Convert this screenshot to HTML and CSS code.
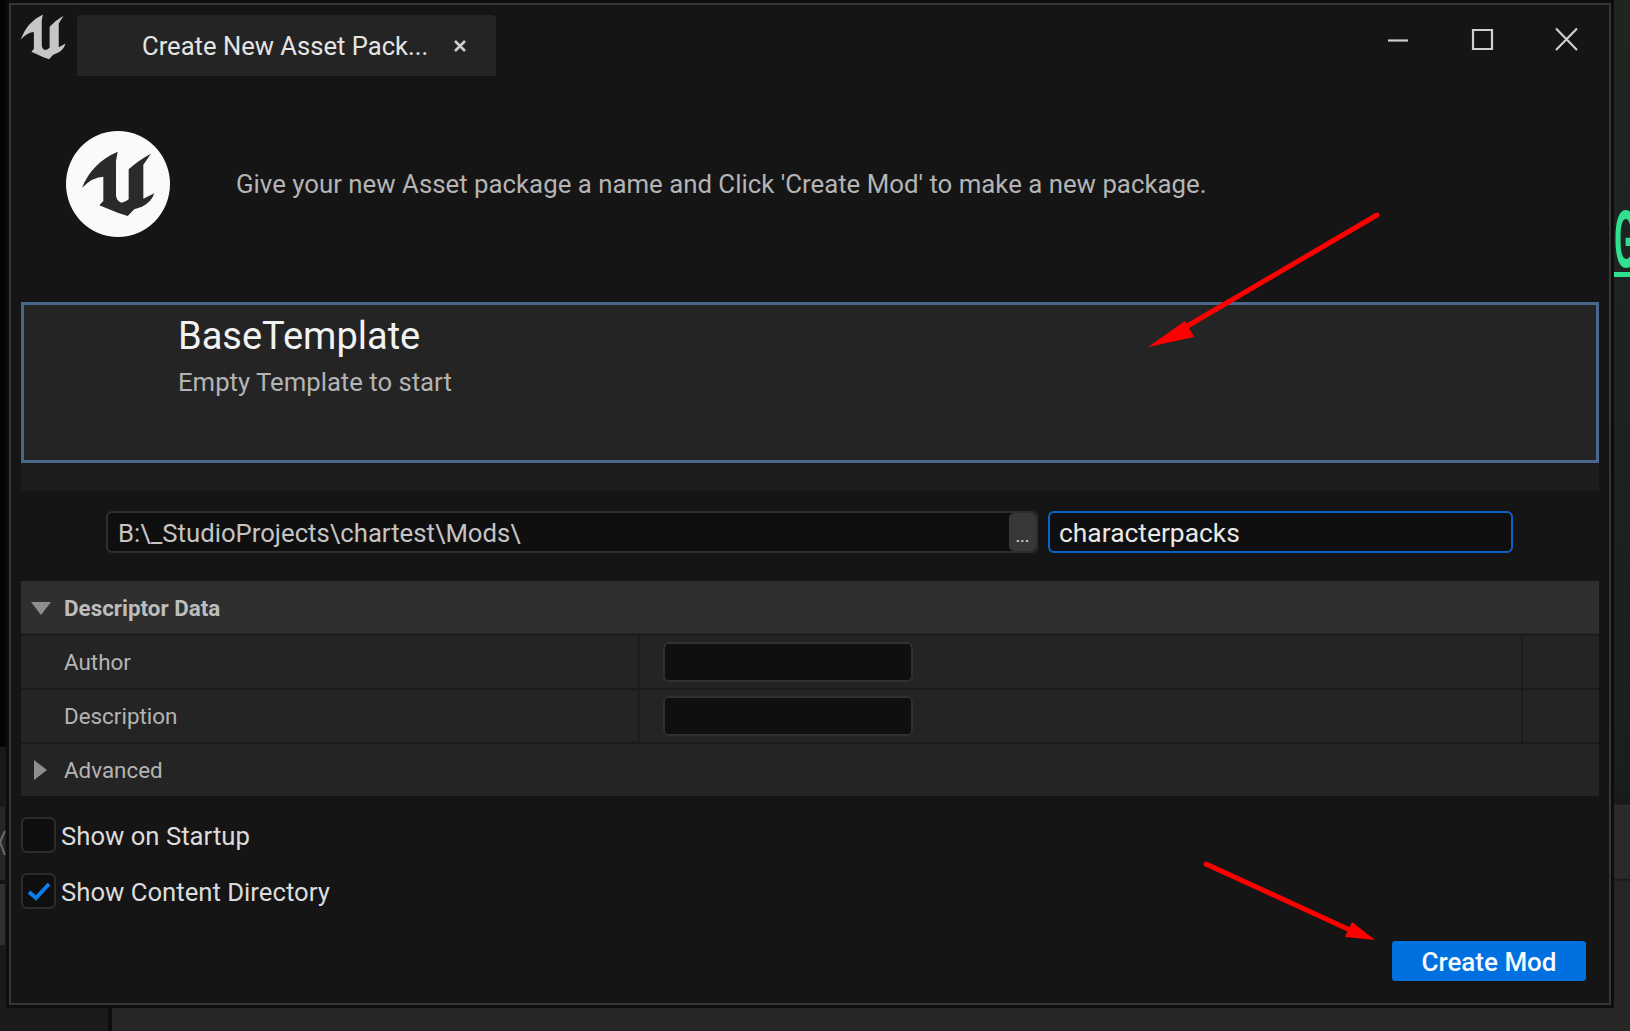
FILE: index.html
```html
<!DOCTYPE html>
<html>
<head>
  <meta charset="utf-8">
  <link rel="stylesheet" href="styles.css">
  <title>Create New Asset Package</title>
</head>
<body>
  <svg class="defs" width="0" height="0">
    <symbol id="ue-logo" viewBox="85 95 222 198" preserveAspectRatio="none">
      <path d="M88 205 Q118 130 195 97 L190 125 V228 Q192 248 207 250 Q220 248 228 240 V150 Q258 122 295 103 L272 136 V238 L305 222 Q295 250 268 262 L245 270 L225 290 L195 280 L140 258 L152 245 V172 Q122 172 88 205 Z"/>
    </symbol>
  </svg>

  <div class="backdrop-right">
    <span class="stray-glyph">G</span>
    <div class="stray-line"></div>
  </div>
  <div class="backdrop-left">
    <svg class="stray-cross" width="6" height="26" viewBox="0 0 6 26"><path d="M5 1 0 12 5 25"/></svg>
  </div>
  <div class="backdrop-bottom"><div class="bottom-bar"></div></div>

  <div class="window">
    <div class="title-bar">
      <svg class="app-logo"><use href="#ue-logo"/></svg>
      <div class="tab">
        <span class="tab-title">Create New Asset Pack...</span>
        <span class="tab-close">
          <svg width="14" height="14" viewBox="0 0 14 14"><path d="M2 2 12 12 M12 2 2 12"/></svg>
        </span>
      </div>
      <div class="window-controls">
        <svg width="24" height="24" viewBox="0 0 24 24"><path d="M2 13.5H22"/></svg>
        <svg width="24" height="24" viewBox="0 0 24 24"><path d="M3 3H22V22H3Z"/></svg>
        <svg width="24" height="24" viewBox="0 0 24 24"><path d="M2 1.5 23 23 M23 1.5 2 23"/></svg>
      </div>
    </div>

    <div class="intro">
      <div class="intro-logo">
        <svg><use href="#ue-logo"/></svg>
      </div>
      <p class="intro-text">Give your new Asset package a name and Click 'Create Mod' to make a new package.</p>
    </div>

    <div class="template-card">
      <div class="template-name">BaseTemplate</div>
      <div class="template-desc">Empty Template to start</div>
    </div>
    <div class="template-strip"></div>

    <div class="path-row">
      <div class="path-field">
        <span class="path-value">B:\_StudioProjects\chartest\Mods\</span>
        <span class="browse-btn">...</span>
      </div>
      <div class="name-field">characterpacks</div>
    </div>

    <div class="details">
      <div class="details-header">
        <span class="arrow-down"></span>
        <span>Descriptor Data</span>
      </div>
      <div class="details-row">
        <div class="cell-label">Author</div>
        <div class="cell-value"><div class="small-input"></div></div>
        <div class="cell-end"></div>
      </div>
      <div class="details-row">
        <div class="cell-label">Description</div>
        <div class="cell-value"><div class="small-input"></div></div>
        <div class="cell-end"></div>
      </div>
      <div class="details-advanced">
        <span class="arrow-right"></span>
        <span>Advanced</span>
      </div>
    </div>

    <div class="footer">
      <div class="checks">
        <div class="check-row">
          <span class="checkbox"></span>
          <span class="check-label">Show on Startup</span>
        </div>
        <div class="check-row">
          <span class="checkbox">
            <svg width="26" height="22" viewBox="0 0 26 22"><path d="M3 12 10 18 23 4"/></svg>
          </span>
          <span class="check-label">Show Content Directory</span>
        </div>
      </div>
      <div class="create-btn">Create Mod</div>
    </div>
  </div>

  <!-- red arrows drawn over the screenshot -->
  <svg class="annotations" width="1630" height="1031" viewBox="0 0 1630 1031">
    <path class="arrow-line" d="M1377 215 1172 335"/>
    <path class="arrow-head" d="M1148 347 1185 321 1194 337Z"/>
    <path class="arrow-line" d="M1206 864 1350 930"/>
    <path class="arrow-head" d="M1375 940 1352 922 1345 937Z"/>
  </svg>
</body>
</html>
```

FILE: styles.css
```css
:root {
  --window: #151515;
  --panel: #242424;
  --field: #0f0f0f;
  --text: #e4e4e4;
  --muted: #b4b4b4;
  --blue: #0070e0;
}

* {
  box-sizing: border-box;
}

html, body {
  height: 100%;
}

body {
  margin: 0;
  background-color: #0a0a0a;
  font-family: Roboto, "Liberation Sans", sans-serif;
  color: var(--text);
  overflow: hidden;
  position: relative;
}

.defs {
  position: absolute;
}

/* bits of the editor behind the dialog */
.backdrop-right {
  position: absolute;
  top: 0;
  right: 0;
  width: 16px;
  height: 100%;
  background: linear-gradient(#202522, #1c2320 30%, #1a1f1d 75%, #191919 78%, #2a2a2a 78.1%, #2a2a2a 85.2%, #1a1a1a 85.3%, #262626 85.6%);
  overflow: hidden;
}

.stray-glyph {
  position: absolute;
  left: 0;
  top: 200px;
  font-size: 80px;
  font-weight: 700;
  line-height: 80px;
  color: #2fe08f;
  transform: scaleX(0.42);
  transform-origin: left center;
}

.stray-line {
  position: absolute;
  left: 0;
  right: 0;
  top: 272px;
  height: 5px;
  background-color: #2fe08f;
}

.backdrop-left {
  position: absolute;
  left: 0;
  top: 0;
  width: 9px;
  height: 100%;
  background: linear-gradient(#050505 72.4%, #1a1a1a 72.5%);
}

.backdrop-left::before {
  content: "";
  position: absolute;
  left: 0;
  top: 807px;
  width: 5px;
  height: 138px;
  background: linear-gradient(#262626 53%, #141414 53%, #141414 56%, #303030 56%);
}

.stray-cross {
  position: absolute;
  left: 0;
  top: 830px;
  fill: none;
  stroke: #6a6a6a;
  stroke-width: 2;
}

.backdrop-bottom {
  position: absolute;
  left: 0;
  right: 0;
  bottom: 0;
  height: 26px;
  background-color: #262626;
}

.bottom-bar {
  width: 112px;
  height: 100%;
  background-color: #1b1b1b;
  border-right: 4px solid #0e0e0e;
}

.window {
  position: absolute;
  left: 9px;
  top: 3px;
  width: 1602px;
  height: 1002px;
  background-color: var(--window);
  border: 2px solid #363636;
  box-shadow: 0 0 0 3px #0d0d0d;
  padding: 0 10px;
  display: flex;
  flex-direction: column;
}

.title-bar {
  display: flex;
  align-items: flex-start;
  height: 71px;
  padding-top: 10px;
}

.app-logo {
  width: 46px;
  height: 46px;
  margin: -1px 0 0 -1px;
  fill: #c6c6c6;
  flex: none;
}

.tab {
  margin-left: 11px;
  width: 419px;
  height: 61px;
  background-color: var(--panel);
  border-radius: 4px 4px 0 0;
  display: flex;
  align-items: center;
  padding-left: 65px;
}

.tab-title {
  font-size: 25.6px;
  width: 311px;
  white-space: nowrap;
}

.tab-close svg {
  display: block;
  fill: none;
  stroke: #d0d0d0;
  stroke-width: 2.6;
}

.window-controls {
  margin-left: auto;
  display: flex;
  gap: 60px;
  padding: 12px 21px 0 0;
}

.window-controls svg {
  display: block;
  fill: none;
  stroke: #cfcfcf;
  stroke-width: 2.2;
}

.intro {
  height: 226px;
  display: flex;
  align-items: center;
  padding: 0 0 10px 45px;
}

.intro-logo {
  width: 104px;
  height: 106px;
  border-radius: 50%;
  background-color: #fafafa;
  display: flex;
  align-items: center;
  justify-content: center;
}

.intro-logo svg {
  width: 74px;
  height: 66px;
  fill: #2a2a2a;
}

.intro-text {
  margin: 0 0 0 66px;
  font-size: 25.8px;
  color: var(--muted);
  white-space: nowrap;
}

.template-card {
  height: 161px;
  background-color: var(--panel);
  border: 3px solid #47688c;
  padding: 7px 0 0 154px;
}

.template-name {
  font-size: 38px;
  line-height: 48px;
  color: #f2f2f2;
}

.template-desc {
  font-size: 25.7px;
  line-height: 44px;
  color: var(--muted);
}

.template-strip {
  height: 28px;
  background-color: #1c1c1c;
}

.path-row {
  display: flex;
  height: 90px;
  padding: 20px 0 0 85px;
  gap: 10px;
}

.path-field {
  width: 932px;
  height: 42px;
  background-color: var(--field);
  border: 2px solid #2e2e2e;
  border-radius: 6px;
  display: flex;
  align-items: center;
  justify-content: space-between;
  padding-left: 10px;
}

.path-value {
  font-size: 25.7px;
  padding-top: 2px;
  color: #c4c4c4;
}

.browse-btn {
  width: 27px;
  height: 38px;
  background-color: #383838;
  border-radius: 5px;
  font-size: 18px;
  line-height: 46px;
  text-align: center;
  color: #ddd;
}

.name-field {
  width: 465px;
  height: 42px;
  background-color: var(--field);
  border: 2px solid #0a62c4;
  border-radius: 6px;
  padding-left: 9px;
  font-size: 26.4px;
  line-height: 40px;
  color: #e8e8e8;
}

.details {
  font-size: 22.4px;
  color: var(--muted);
}

.details-header {
  height: 53px;
  padding-top: 2px;
  background-color: #2f2f2f;
  display: flex;
  align-items: center;
  font-weight: 700;
  color: #bdbdbd;
  border-bottom: 1px solid #262626;
}

.arrow-down {
  width: 0;
  height: 0;
  margin: 0 13px 0 10px;
  border-left: 10px solid transparent;
  border-right: 10px solid transparent;
  border-top: 13px solid #8e8e8e;
}

.details-row {
  height: 54px;
  background-color: var(--panel);
  border-top: 2px solid #1b1b1b;
  display: flex;
}

.cell-label {
  width: 617px;
  padding-left: 43px;
  line-height: 52px;
}

.cell-value {
  flex: 1;
  border-left: 2px solid #1c1c1c;
  padding: 6px 0 0 23px;
}

.cell-end {
  width: 78px;
  border-left: 2px solid #1c1c1c;
}

.small-input {
  width: 250px;
  height: 40px;
  background-color: var(--field);
  border: 2px solid #303030;
  border-radius: 6px;
}

.details-advanced {
  height: 54px;
  background-color: var(--panel);
  border-top: 2px solid #1b1b1b;
  display: flex;
  align-items: center;
}

.arrow-right {
  width: 0;
  height: 0;
  margin: 0 17px 0 13px;
  border-top: 10px solid transparent;
  border-bottom: 10px solid transparent;
  border-left: 13px solid #8e8e8e;
}

.footer {
  flex: 1;
  display: flex;
  justify-content: space-between;
}

.checks {
  padding-top: 21px;
  display: flex;
  flex-direction: column;
  gap: 20px;
}

.check-row {
  display: flex;
  align-items: center;
  gap: 5px;
  font-size: 25.7px;
  color: #dcdcdc;
}

.check-label {
  padding-top: 2px;
}

.checkbox {
  width: 35px;
  height: 36px;
  background-color: var(--field);
  border: 2px solid #2c2c2c;
  border-radius: 6px;
  display: flex;
  align-items: center;
  justify-content: center;
}

.checkbox svg {
  fill: none;
  stroke: #0f7cec;
  stroke-width: 4;
}

.create-btn {
  width: 194px;
  height: 40px;
  margin: 145px 13px 0 0;
  background-color: var(--blue);
  border-radius: 3px;
  text-align: center;
  font-size: 26px;
  font-weight: 500;
  line-height: 42px;
  color: #f4f8ff;
}

.annotations {
  position: absolute;
  left: 0;
  top: 0;
  pointer-events: none;
}

.arrow-line {
  fill: none;
  stroke: #ff0000;
  stroke-width: 5;
  stroke-linecap: round;
}

.arrow-head {
  fill: #ff0000;
}
```
